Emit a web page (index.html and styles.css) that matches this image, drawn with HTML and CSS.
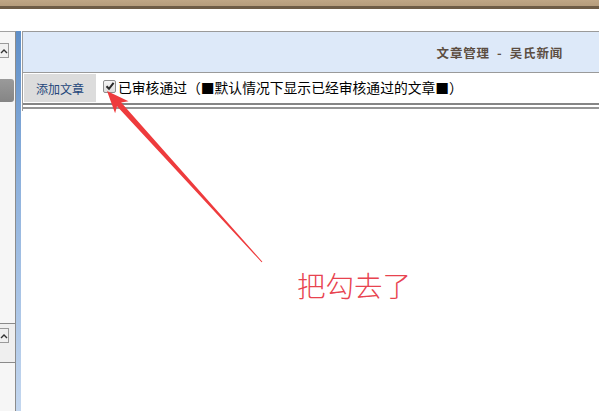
FILE: index.html
```html
<!DOCTYPE html>
<html lang="zh-CN">
<head>
<meta charset="utf-8">
<title>文章管理 - 吴氏新闻</title>
<link rel="stylesheet" href="styles.css">
</head>
<body>
<div class="page">
  <div class="topbar"></div>
  <div class="gap"></div>
  <div class="frame">
    <div class="side">
      <div class="upbtn"><svg width="8" height="6" viewBox="0 0 8 6"><path d="M1 5 L4 2 L7 5" fill="none" stroke="#333" stroke-width="1.4"/></svg></div>
      <div class="knob"></div>
      <div class="lower">
        <div class="upbtn"><svg width="8" height="6" viewBox="0 0 8 6"><path d="M1 5 L4 2 L7 5" fill="none" stroke="#333" stroke-width="1.4"/></svg></div>
      </div>
    </div>
    <div class="strip"></div>
    <div class="main">
      <div class="box">
        <div class="header"><span class="title">文章管理 &nbsp;-&nbsp; 吴氏新闻</span></div>
        <div class="toolbar">
          <div class="btn">添加文章</div>
          <span class="check"><svg width="10" height="10" viewBox="0 0 10 10"><path d="M1.5 5.2 L4 7.8 L8.6 1.8" fill="none" stroke="#2b2b2b" stroke-width="2"/></svg></span>
          <span class="label">已审核通过（■默认情况下显示已经审核通过的文章■）</span>
        </div>
        <div class="rule"></div>
      </div>
    </div>
  </div>
  <svg class="arrow" width="599" height="411" viewBox="0 0 599 411">
    <polygon points="107,91 128.5,101.2 121.2,102.4 262.4,261.7 261.6,262.3 117,106.2 115.1,113.3" fill="#ee3b3d"/>
  </svg>
  <div class="note">把勾去了</div>
</div>
</body>
</html>
```
FILE: styles.css
```css
html, body {
  margin: 0;
  padding: 0;
  background: #fff;
}
.page {
  position: relative;
  width: 599px;
  height: 411px;
  overflow: hidden;
  font-family: "Noto Sans CJK SC", "Liberation Sans", sans-serif;
}
.topbar {
  height: 9px;
  background: linear-gradient(to bottom, #bfa686 0, #b59c7c 6px, #6e5c47 6px, #6e5c47 9px);
}
.gap {
  height: 22px;
}
.frame {
  display: flex;
  height: 380px;
}
.side {
  width: 15px;
  border-top: 1px solid #a2a2a2;
  border-right: 1px solid #8c8c8c;
  background: #f6f6f6;
  display: flex;
  flex-direction: column;
}
.upbtn {
  width: 8px;
  height: 13px;
  margin-top: 11px;
  border: 1px solid #9a9a9a;
  border-left: none;
  background: #f0f0f0;
  display: flex;
  align-items: center;
  justify-content: center;
}
.knob {
  width: 14px;
  height: 23px;
  margin-top: 21px;
  border-radius: 0 3px 3px 0;
  background: linear-gradient(to bottom, #9a9a9a, #858585);
}
.lower {
  margin-top: 221px;
  height: 38px;
  border-top: 1px solid #8a8a8a;
  border-bottom: 1px solid #8a8a8a;
  background: #efefef;
}
.lower .upbtn {
  margin-top: 4px;
}
.strip {
  width: 5px;
  background: linear-gradient(to bottom, #5f8fc8 0, #8fb2dd 40%, #c4d7ef 100%);
}
.main {
  flex: 1;
  margin-left: 1px;
}
.box {
  border-left: 1px solid #9c9c9c;
  padding-bottom: 2px;
}
.header {
  height: 40px;
  background: #dde9f9;
  border-top: 1px solid #9a9a9a;
  border-bottom: 1px solid #9a9a9a;
  display: flex;
  align-items: center;
  justify-content: flex-end;
  padding-right: 36px;
}
.title {
  font-size: 12.5px;
  font-weight: bold;
  color: #5c4e42;
  letter-spacing: 0.8px;
}
.toolbar {
  height: 28px;
  padding: 1px 0 1px 1px;
  display: flex;
  align-items: center;
}
.btn {
  width: 72px;
  height: 28px;
  background: #dcdcdc;
  color: #24467a;
  font-size: 12px;
  display: flex;
  align-items: center;
  justify-content: center;
}
.check {
  width: 11px;
  height: 11px;
  margin-left: 7px;
  margin-top: -4px;
  border: 1px solid #8f8f8f;
  border-radius: 2px;
  background: linear-gradient(to bottom, #f6f6f6, #dcdcdc);
  display: flex;
  align-items: center;
  justify-content: center;
}
.label {
  margin-left: 2px;
  margin-top: -2px;
  font-size: 13.8px;
  color: #000;
  white-space: nowrap;
}
.rule {
  height: 2px;
  border-top: 2px solid #858585;
  border-bottom: 2px solid #959595;
}
.arrow {
  position: absolute;
  left: 0;
  top: 0;
}
.note {
  position: absolute;
  left: 297px;
  top: 268px;
  font-size: 28.5px;
  font-weight: 300;
  line-height: 1.2;
  color: #e8434f;
  white-space: nowrap;
}
```
